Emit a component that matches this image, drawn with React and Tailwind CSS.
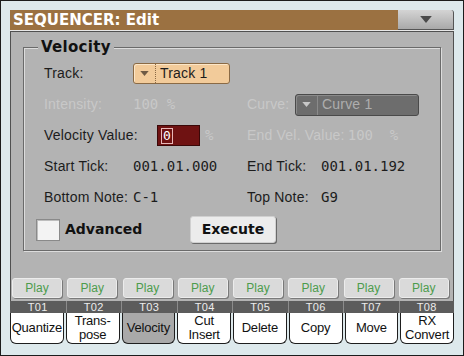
import React from "react";

const lbl = "font-['Liberation_Sans',Arial,sans-serif] text-[14px] tracking-[0.2px] text-[#1c1c1c]";
const dis = "font-['Liberation_Sans',Arial,sans-serif] text-[14px] tracking-[0.2px] text-[#c8c8c8]";
const mono = "font-['DejaVu_Sans_Mono',monospace] text-[14px] text-[#1c1c1c]";
const monoDis = "font-['DejaVu_Sans_Mono',monospace] text-[14px] text-[#c8c8c8]";
const bold = "font-['DejaVu_Sans',sans-serif] font-bold";

function Arrow({ color, w = 10, h = 6 }) {
  return (
    <svg width={w} height={h} viewBox="0 0 10 6">
      <polygon points="0,0 10,0 5,6" fill={color} />
    </svg>
  );
}

const tracks = ["T01", "T02", "T03", "T04", "T05", "T06", "T07", "T08"];
const tabs = [
  ["Quantize"],
  ["Trans-", "pose"],
  ["Velocity"],
  ["Cut", "Insert"],
  ["Delete"],
  ["Copy"],
  ["Move"],
  ["RX", "Convert"],
];

export default function App() {
  return (
    <div className="w-[464px] h-[356px] border border-[#1c1c1c] bg-[#dde9ec] flex flex-col px-[9px] pt-[9px] overflow-hidden">
      {/* Title bar */}
      <div className="flex h-[20px] shrink-0">
        <div className={`w-[389px] bg-[#9b7141] flex items-center pl-[3px] text-white text-[15px] ${bold}`}>
          SEQUENCER: Edit
        </div>
        <div className="w-[56px] bg-gradient-to-b from-[#d4d4d4] to-[#a9a9a9] border-b border-r border-[#555] rounded-tr-[3px] flex items-center justify-center">
          <Arrow color="#4a4a4a" w={12} h={7} />
        </div>
      </div>
      <div className="h-[1px] bg-[#e8e8e8] shrink-0" />

      {/* Panel */}
      <div className="bg-[#b3b3b3] border-x border-t border-[#505050] pt-[15px] pb-[3px] shrink-0">
        {/* Group box */}
        <div className="relative mx-[12px] h-[204px] border border-[#6a6a6a] shadow-[inset_1px_1px_0_#dcdcdc,1px_1px_0_#dcdcdc] pt-[10px] pl-[20px]">
          <div className={`absolute left-[14px] top-[-10px] bg-[#b3b3b3] px-[3px] text-[15px] leading-[18px] tracking-[0.3px] text-[#111] ${bold}`}>
            Velocity
          </div>

          {/* Track */}
          <div className="flex items-center h-[31px]">
            <div className={`w-[89px] ${lbl}`}>Track:</div>
            <div className="w-[97px] h-[21px] bg-[#f2cb9a] border border-[#8a6a45] rounded-[3px] flex items-center shadow-[inset_1px_1px_0_#fbe6c8]">
              <div className="w-[21px] flex items-center justify-center">
                <Arrow color="#6e5a44" w={9} h={5} />
              </div>
              <div className="h-full border-l border-dotted border-[#8a6a45]" />
              <div className={`pl-[4px] ${lbl}`}>Track 1</div>
            </div>
          </div>

          {/* Intensity / Curve */}
          <div className="flex items-center h-[31px]">
            <div className={`w-[89px] ${dis}`}>Intensity:</div>
            <div className={`w-[114px] ${monoDis}`}>100 %</div>
            <div className={`w-[48px] ${dis}`}>Curve:</div>
            <div className="w-[124px] h-[22px] bg-[#6d6d6d] border border-[#4a4a4a] rounded-[3px] flex items-center shadow-[inset_1px_1px_0_#8a8a8a]">
              <div className="w-[21px] flex items-center justify-center">
                <Arrow color="#c8c8c8" w={9} h={5} />
              </div>
              <div className="h-full border-l border-[#8a8a8a]" />
              <div className="pl-[4px] font-['Liberation_Sans',Arial,sans-serif] text-[14px] tracking-[0.2px] text-[#aeaeae]">Curve 1</div>
            </div>
          </div>

          {/* Velocity value / End vel */}
          <div className="flex items-center h-[31px]">
            <div className={`w-[113px] ${lbl}`}>Velocity Value:</div>
            <div className="w-[43px] h-[21px] bg-[#6f1212] border border-[#3a0808] flex items-center pl-[3px]">
              <span className="font-['DejaVu_Sans_Mono',monospace] text-[13px] leading-[14px] text-white border border-[#e8b8b8] px-[1px]">0</span>
            </div>
            <div className={`w-[47px] pl-[5px] ${monoDis}`}>%</div>
            <div className={dis}>End Vel. Value: </div>
            <div className={`pl-[3px] ${monoDis}`}>100&nbsp;&nbsp;%</div>
          </div>

          {/* Start/End tick */}
          <div className="flex items-center h-[31px]">
            <div className={`w-[89px] ${lbl}`}>Start Tick:</div>
            <div className={`w-[114px] ${mono}`}>001.01.000</div>
            <div className={`w-[74px] ${lbl}`}>End Tick:</div>
            <div className={mono}>001.01.192</div>
          </div>

          {/* Notes */}
          <div className="flex items-center h-[30px]">
            <div className={`w-[89px] ${lbl}`}>Bottom Note:</div>
            <div className={`w-[114px] ${mono}`}>C-1</div>
            <div className={`w-[74px] ${lbl}`}>Top Note:</div>
            <div className={mono}>G9</div>
          </div>

          {/* Advanced / Execute */}
          <div className="flex items-center h-[27px] mt-[4px] -ml-[8px]">
            <div className="w-[24px] h-[22px] bg-[#f3f3f3] border border-[#8a8a8a] shadow-[inset_1px_1px_0_#bdbdbd]" />
            <div className={`w-[130px] pl-[5px] text-[14px] text-[#111] ${bold}`}>Advanced</div>
            <div className={`w-[86px] h-[27px] bg-[#ececec] rounded-[3px] border border-[#d0d0d0] shadow-[1px_1px_0_#6a6a6a] flex items-center justify-center text-[14px] text-[#111] ${bold}`}>
              Execute
            </div>
          </div>
        </div>

        {/* Play buttons */}
        <div className="grid grid-cols-8 mt-[27px] h-[20px]">
          {tracks.map((t) => (
            <div key={t} className="pl-[1px]">
              <div className="w-[50px] h-[20px] bg-[#dadada] rounded-[3px] border border-[#ececec] shadow-[1px_1px_0_#7a7a7a] flex items-center justify-center font-['Liberation_Sans',Arial,sans-serif] text-[12px] text-[#4d9c4d]">
                Play
              </div>
            </div>
          ))}
        </div>
      </div>

      {/* Track strip */}
      <div className="grid grid-cols-8 h-[12px] bg-[#5c5c5c] shrink-0">
        {tracks.map((t, i) => (
          <div
            key={t}
            className={`flex items-center justify-center font-['Liberation_Sans',Arial,sans-serif] text-[11px] leading-[12px] tracking-[0.3px] text-[#ececec] ${i > 0 ? "border-l border-[#8c8c8c]" : ""}`}
          >
            {t}
          </div>
        ))}
      </div>

      {/* Tabs */}
      <div className="grid grid-cols-8 gap-[2px] h-[31px] shrink-0">
        {tabs.map((lines, i) => (
          <div
            key={i}
            className={`border border-t-0 border-[#1e1e1e] rounded-b-[6px] flex flex-col items-center justify-center font-['Liberation_Sans',Arial,sans-serif] text-[13px] leading-[14px] tracking-[-0.2px] text-[#111] ${i === 2 ? "bg-[#a9a9a9]" : "bg-white"}`}
          >
            {lines.map((l) => (
              <span key={l}>{l}</span>
            ))}
          </div>
        ))}
      </div>
    </div>
  );
}
